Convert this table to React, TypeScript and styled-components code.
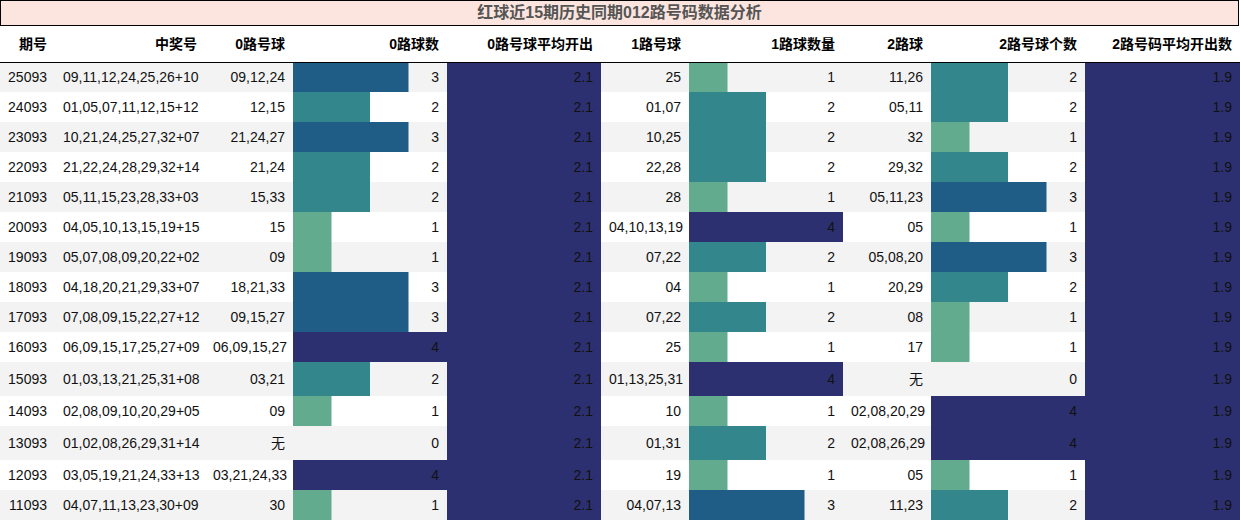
import React from "react";
import styled, { createGlobalStyle } from "styled-components";

const GlobalStyle = createGlobalStyle`
  html, body { margin: 0; padding: 0; background: #ffffff; }
  body {
    font-family: "Liberation Sans", "Noto Sans CJK SC", sans-serif;
    font-size: 14px;
    color: #111111;
  }
`;

const NAVY = "#2d3070";
const BAR_COLORS: Record<number, string> = {
  1: "#62ab8e",
  2: "#33868b",
  3: "#1f5d86",
  4: NAVY,
};

type Row = {
  period: string;
  draw: string;
  r0: string;
  c0: number;
  r1: string;
  c1: number;
  r2: string;
  c2: number;
};

const rows: Row[] = [
  { period: "25093", draw: "09,11,12,24,25,26+10", r0: "09,12,24", c0: 3, r1: "25", c1: 1, r2: "11,26", c2: 2 },
  { period: "24093", draw: "01,05,07,11,12,15+12", r0: "12,15", c0: 2, r1: "01,07", c1: 2, r2: "05,11", c2: 2 },
  { period: "23093", draw: "10,21,24,25,27,32+07", r0: "21,24,27", c0: 3, r1: "10,25", c1: 2, r2: "32", c2: 1 },
  { period: "22093", draw: "21,22,24,28,29,32+14", r0: "21,24", c0: 2, r1: "22,28", c1: 2, r2: "29,32", c2: 2 },
  { period: "21093", draw: "05,11,15,23,28,33+03", r0: "15,33", c0: 2, r1: "28", c1: 1, r2: "05,11,23", c2: 3 },
  { period: "20093", draw: "04,05,10,13,15,19+15", r0: "15", c0: 1, r1: "04,10,13,19", c1: 4, r2: "05", c2: 1 },
  { period: "19093", draw: "05,07,08,09,20,22+02", r0: "09", c0: 1, r1: "07,22", c1: 2, r2: "05,08,20", c2: 3 },
  { period: "18093", draw: "04,18,20,21,29,33+07", r0: "18,21,33", c0: 3, r1: "04", c1: 1, r2: "20,29", c2: 2 },
  { period: "17093", draw: "07,08,09,15,22,27+12", r0: "09,15,27", c0: 3, r1: "07,22", c1: 2, r2: "08", c2: 1 },
  { period: "16093", draw: "06,09,15,17,25,27+09", r0: "06,09,15,27", c0: 4, r1: "25", c1: 1, r2: "17", c2: 1 },
  { period: "15093", draw: "01,03,13,21,25,31+08", r0: "03,21", c0: 2, r1: "01,13,25,31", c1: 4, r2: "无", c2: 0 },
  { period: "14093", draw: "02,08,09,10,20,29+05", r0: "09", c0: 1, r1: "10", c1: 1, r2: "02,08,20,29", c2: 4 },
  { period: "13093", draw: "01,02,08,26,29,31+14", r0: "无", c0: 0, r1: "01,31", c1: 2, r2: "02,08,26,29", c2: 4 },
  { period: "12093", draw: "03,05,19,21,24,33+13", r0: "03,21,24,33", c0: 4, r1: "19", c1: 1, r2: "05", c2: 1 },
  { period: "11093", draw: "04,07,11,13,23,30+09", r0: "30", c0: 1, r1: "04,07,13", c1: 3, r2: "11,23", c2: 2 },
];

const headers = [
  "期号",
  "中奖号",
  "0路号球",
  "0路球数",
  "0路号球平均开出",
  "1路号球",
  "1路球数量",
  "2路球",
  "2路号球个数",
  "2路号码平均开出数",
];

const colWidths = [55, 150, 88, 154, 154, 88, 154, 88, 154, 155];

const Page = styled.div`
  width: 1240px;
`;

const Title = styled.div`
  box-sizing: border-box;
  width: 1239px;
  height: 26px;
  border: 1px solid #000000;
  background: #fde5df;
  color: #555555;
  font-size: 16px;
  font-weight: bold;
  line-height: 23px;
  text-align: center;
`;

const Table = styled.table`
  width: 1240px;
  table-layout: fixed;
  border-collapse: collapse;
  border-spacing: 0;
`;

const HeadRow = styled.tr`
  height: 36px;
`;

const HeadCell = styled.th`
  padding: 0 8px;
  border-bottom: 1px solid #000000;
  text-align: right;
  font-weight: bold;
  color: #000000;
  white-space: nowrap;
  line-height: 16px;
`;

const BodyRow = styled.tr<{ $striped: boolean; $tall: boolean }>`
  height: ${(p) => (p.$tall ? 34 : 30)}px;
  background: ${(p) => (p.$striped ? "#f3f3f3" : "#ffffff")};
`;

const Cell = styled.td`
  padding: 0 8px;
  text-align: right;
  white-space: nowrap;
  line-height: 16px;
  vertical-align: middle;
`;

const BarCell = styled(Cell)<{ $pct: number; $color: string }>`
  background-image: linear-gradient(${(p) => p.$color}, ${(p) => p.$color});
  background-repeat: no-repeat;
  background-position: left top;
  background-size: ${(p) => p.$pct}% 100%;
`;

const FillCell = styled(Cell)`
  background: ${NAVY};
  color: #111111;
`;

function Bar({ value }: { value: number }) {
  return (
    <BarCell $pct={(value / 4) * 100} $color={BAR_COLORS[value] ?? "transparent"}>
      {value}
    </BarCell>
  );
}

export default function App() {
  return (
    <Page>
      <GlobalStyle />
      <Title>红球近15期历史同期012路号码数据分析</Title>
      <Table>
        <colgroup>
          {colWidths.map((w, i) => (
            <col key={i} style={{ width: w }} />
          ))}
        </colgroup>
        <thead>
          <HeadRow>
            {headers.map((h) => (
              <HeadCell key={h}>{h}</HeadCell>
            ))}
          </HeadRow>
        </thead>
        <tbody>
          {rows.map((r, i) => (
            <BodyRow
              key={r.period}
              $striped={i % 2 === 0}
              $tall={r.r0 === "无" || r.r1 === "无" || r.r2 === "无"}
            >
              <Cell>{r.period}</Cell>
              <Cell>{r.draw}</Cell>
              <Cell>{r.r0}</Cell>
              <Bar value={r.c0} />
              <FillCell>2.1</FillCell>
              <Cell>{r.r1}</Cell>
              <Bar value={r.c1} />
              <Cell>{r.r2}</Cell>
              <Bar value={r.c2} />
              <FillCell>1.9</FillCell>
            </BodyRow>
          ))}
        </tbody>
      </Table>
    </Page>
  );
}
